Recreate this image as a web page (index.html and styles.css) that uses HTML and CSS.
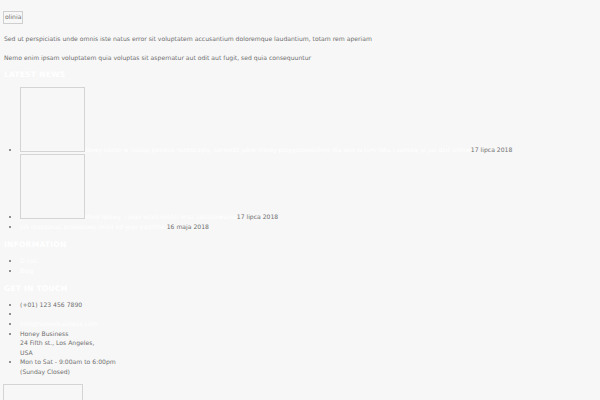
FILE: index.html
```html
<!DOCTYPE html>
<html lang="pl">
<head>
<meta charset="utf-8">
<title>olinia</title>
<link rel="stylesheet" href="styles.css">
</head>
<body>
<div class="page">
  <div class="logo">olinia</div>
  <p class="lead lead-first">Sed ut perspiciatis unde omnis iste natus error sit voluptatem accusantium doloremque laudantium, totam rem aperiam</p>
  <p class="lead">Nemo enim ipsam voluptatem quia voluptas sit aspernatur aut odit aut fugit, sed quia consequuntur</p>

  <h3 class="title">Latest News</h3>
  <ul class="list list-news">
    <li><span class="thumb"></span><a class="link" href="#">Nowy sezon w naszej pasiece rozpoczęty, sprawdź jakie miody przygotowaliśmy dla was w tym roku i zamów je już dziś online</a><span class="date">17 lipca 2018</span></li>
    <li><span class="thumb"></span><a class="link" href="#">Miód lipowy – jego właściwości oraz zastosowanie</a><span class="date">17 lipca 2018</span></li>
    <li><a class="link" href="#">Jak rozpoznać prawdziwy miód od jego podróbki</a><span class="date">16 maja 2018</span></li>
  </ul>

  <h3 class="title title-info">Information</h3>
  <ul class="list">
    <li><a class="link" href="#">O nas</a></li>
    <li><a class="link" href="#">Blog</a></li>
  </ul>

  <h3 class="title title-touch">Get in touch</h3>
  <ul class="list">
    <li>(+01) 123 456 7890</li>
    <li><a class="link" href="#"></a></li>
    <li><a class="link" href="#">info@honeybusiness.com</a></li>
    <li>Honey Business<br>24 Fifth st., Los Angeles,<br>USA</li>
    <li>Mon to Sat - 9:00am to 6:00pm<br>(Sunday Closed)</li>
  </ul>

  <div class="badge"></div>
</div>
</body>
</html>
```
FILE: styles.css
```css
html, body {
  margin: 0;
  padding: 0;
  background: #f7f7f7;
}

.page {
  padding: 11px 3px 0 3px;
  font-family: "DejaVu Sans", Verdana, sans-serif;
  font-size: 6.1px;
  line-height: 9.6px;
  color: #6f6f6f;
}

.logo {
  display: inline-block;
  border: 1px solid #cfcfcf;
  padding: 0 1px;
  line-height: 10.6px;
  color: #6f6f6f;
}

.lead {
  margin: 9.6px 0 0 1px;
}

.lead-first {
  margin-top: 10.6px;
}

.title {
  margin: 7px 0 0 1px;
  font-size: 7.6px;
  line-height: 9.6px;
  font-weight: bold;
  text-transform: uppercase;
  color: #ffffff;
  letter-spacing: 0.2px;
}

.title-info {
  margin-top: 9px;
}

.title-touch {
  margin-top: 9px;
}

.list {
  margin: 6px 0 0 0;
  padding: 0 0 0 17px;
}

.list-news {
  margin-top: 7px;
}

.list li {
  line-height: 9.6px;
}

.thumb {
  display: inline-block;
  width: 63px;
  height: 63px;
  border: 1px solid #d4d4d4;
  vertical-align: baseline;
}

.link {
  color: #ffffff;
  text-decoration: none;
}

.date {
  color: #6f6f6f;
}

.badge {
  margin-top: 8px;
  width: 78px;
  height: 40px;
  border: 1px solid #d4d4d4;
}
```
